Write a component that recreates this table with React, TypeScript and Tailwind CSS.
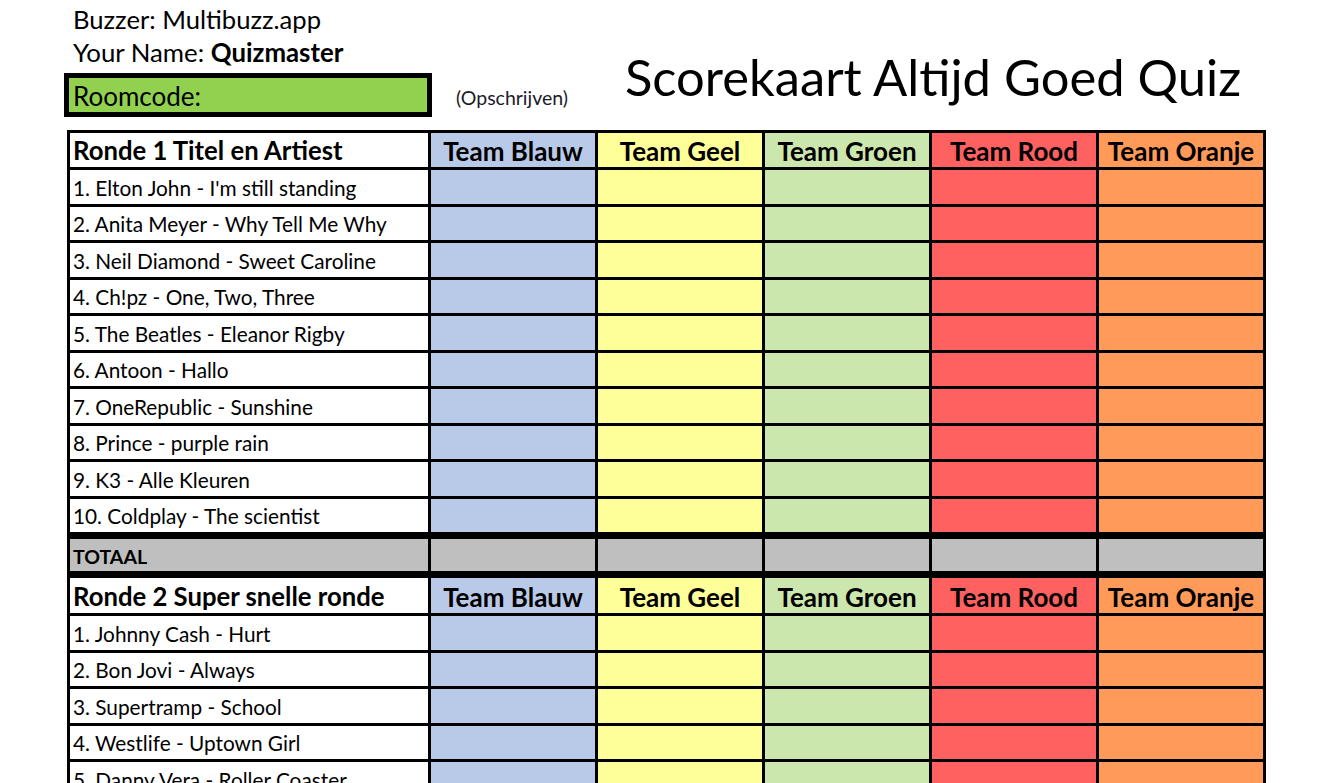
import React from "react";

const round1 = [
  "1. Elton John - I'm still standing",
  "2. Anita Meyer - Why Tell Me Why",
  "3. Neil Diamond - Sweet Caroline",
  "4. Ch!pz - One, Two, Three",
  "5. The Beatles - Eleanor Rigby",
  "6. Antoon - Hallo",
  "7. OneRepublic - Sunshine",
  "8. Prince - purple rain",
  "9. K3 - Alle Kleuren",
  "10. Coldplay - The scientist",
];

const round2 = [
  "1. Johnny Cash - Hurt",
  "2. Bon Jovi - Always",
  "3. Supertramp - School",
  "4. Westlife - Uptown Girl",
  "5. Danny Vera - Roller Coaster",
];

const teams = [
  { name: "Team Blauw", bg: "bg-[#b9c9e8]" },
  { name: "Team Geel", bg: "bg-[#ffff99]" },
  { name: "Team Groen", bg: "bg-[#cbe7ad]" },
  { name: "Team Rood", bg: "bg-[#ff6060]" },
  { name: "Team Oranje", bg: "bg-[#ff9a58]" },
];

const rowGrid = "grid grid-cols-[358px_164px_164px_164px_164px_164px] gap-x-[3px]";

function HeaderRow({ title, className = "" }: { title: string; className?: string }) {
  return (
    <div className={`${rowGrid} h-[34px] ${className}`}>
      <div className="bg-white flex items-center pl-[3px] text-[25.7px] font-bold leading-none pt-[2px] whitespace-nowrap">
        {title}
      </div>
      {teams.map((t) => (
        <div
          key={t.name}
          className={`${t.bg} flex items-center justify-center text-[26px] font-bold leading-none pt-[2px] whitespace-nowrap`}
        >
          {t.name}
        </div>
      ))}
    </div>
  );
}

function SongRow({ text }: { text: string }) {
  return (
    <div className={`${rowGrid} h-[33.5px]`}>
      <div className="bg-white flex items-center pl-[3px] text-[20.8px] leading-none pt-[3px] whitespace-nowrap overflow-hidden">
        {text}
      </div>
      {teams.map((t) => (
        <div key={t.name} className={t.bg} />
      ))}
    </div>
  );
}

export default function App() {
  return (
    <div className="w-[1318px] min-h-[783px] bg-white text-black font-['Lato',sans-serif] overflow-hidden">
      <div className="flex items-end pt-[3px]">
        <div className="ml-[64px] w-[368px] flex flex-col">
          <div className="pl-[9px] text-[25.6px] leading-[33px] whitespace-nowrap">Buzzer: Multibuzz.app</div>
          <div className="pl-[9px] text-[25.8px] leading-[33px] whitespace-nowrap">
            Your Name: <span className="font-bold">Quizmaster</span>
          </div>
          <div className="mt-[4px] h-[44px] border-[5px] border-black bg-[#92d050] flex items-center pl-[4px] text-[26px] leading-none pt-[2px]">
            Roomcode:
          </div>
        </div>
        <div className="ml-[24px] w-[115px] mb-[10px] text-[19.5px] leading-none text-[#1a1a2a] whitespace-nowrap">
          (Opschrijven)
        </div>
        <div className="ml-[54px] mb-[14px] text-[50.7px] leading-none whitespace-nowrap">
          Scorekaart Altijd Goed Quiz
        </div>
      </div>

      <div className="mt-[13px] ml-[67px] w-fit bg-black p-[3px] flex flex-col gap-[3px]">
        <HeaderRow title="Ronde 1 Titel en Artiest" />
        {round1.map((s) => (
          <SongRow key={s} text={s} />
        ))}
        <div className={`${rowGrid} h-[32px] mt-[4px]`}>
          <div className="bg-[#bfbfbf] flex items-center pl-[3px] text-[19.5px] font-bold leading-none pt-[3px]">
            TOTAAL
          </div>
          <div className="bg-[#bfbfbf]" />
          <div className="bg-[#bfbfbf]" />
          <div className="bg-[#bfbfbf]" />
          <div className="bg-[#bfbfbf]" />
          <div className="bg-[#bfbfbf]" />
        </div>
        <HeaderRow title="Ronde 2 Super snelle ronde" className="mt-[4px] h-[35px]" />
        {round2.map((s) => (
          <SongRow key={s} text={s} />
        ))}
      </div>
    </div>
  );
}
